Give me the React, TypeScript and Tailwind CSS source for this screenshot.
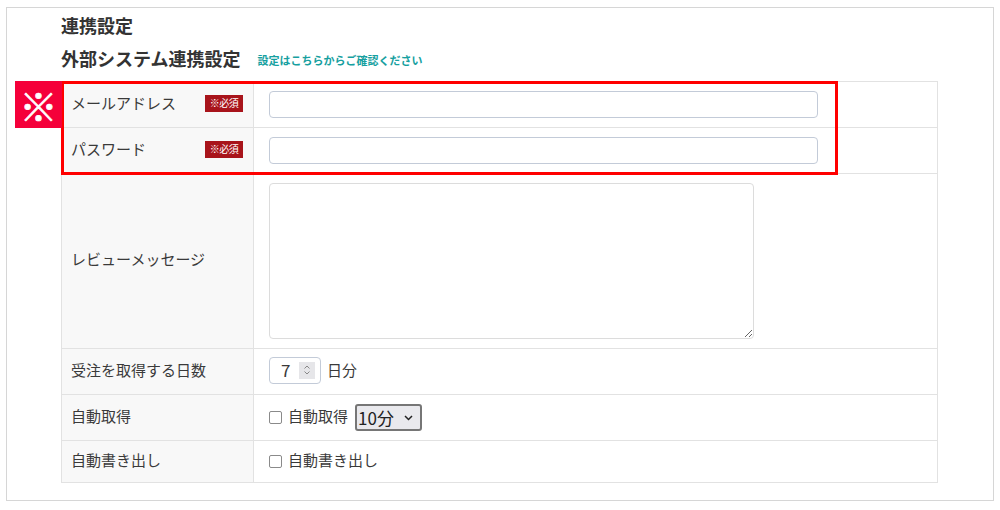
import React from 'react';

const font = { fontFamily: '"Noto Sans CJK JP", "Noto Sans", sans-serif' };

const Required: React.FC = () => (
  <span className="inline-flex items-center justify-center w-[38px] h-[17px] bg-[#a8141b] text-white text-[10px] leading-none tracking-tighter">
    ※必須
  </span>
);

export default function App() {
  return (
    <div className="w-[1000px] h-[510px] bg-white text-[#333]" style={font}>
      <div className="ml-[6px] mt-[7px] w-[988px] h-[494px] border border-[#d6d6d6] pl-[54px] relative">
        <h2 className="text-[18px] font-bold leading-none pt-[8px] text-[#333]">連携設定</h2>
        <div className="flex items-end mt-[15px]">
          <h3 className="text-[18px] font-bold leading-none text-[#333]">外部システム連携設定</h3>
          <a className="ml-[17px] text-[11px] font-bold text-[#16a0a0] leading-none mb-[1px]">
            設定はこちらからご確認ください
          </a>
        </div>

        <div className="relative mt-[14px] w-[877px]">
          <table className="w-full border-collapse text-[15px] text-[#3a3a3a] border border-[#e2e2e2]">
            <tbody>
              <tr className="h-[46px] border-b border-[#e2e2e2]">
                <th className="w-[192px] bg-[#f8f8f8] font-normal text-left pl-[9px] pr-[10px] pb-[3px] border-r border-[#e2e2e2]">
                  <div className="flex items-center justify-between">
                    <span>メールアドレス</span>
                    <Required />
                  </div>
                </th>
                <td className="pl-[15px]">
                  <input className="w-[549px] h-[27px] border border-[#c3cbd8] rounded-[4px] bg-white block" />
                </td>
              </tr>
              <tr className="h-[46px] border-b border-[#e2e2e2]">
                <th className="bg-[#f8f8f8] font-normal text-left pl-[9px] pr-[10px] pb-[3px] border-r border-[#e2e2e2]">
                  <div className="flex items-center justify-between">
                    <span>パスワード</span>
                    <Required />
                  </div>
                </th>
                <td className="pl-[15px]">
                  <input type="password" className="w-[549px] h-[27px] border border-[#c3cbd8] rounded-[4px] bg-white block" />
                </td>
              </tr>
              <tr className="h-[175px] border-b border-[#e2e2e2]">
                <th className="bg-[#f8f8f8] font-normal text-left pl-[9px] pb-[4px] border-r border-[#e2e2e2]">レビューメッセージ</th>
                <td className="pl-[15px] align-top pt-[9px]">
                  <textarea className="w-[485px] h-[156px] border border-[#dcdcdc] rounded-[4px] block resize" />
                </td>
              </tr>
              <tr className="h-[46px] border-b border-[#e2e2e2]">
                <th className="bg-[#f8f8f8] font-normal text-left pl-[9px] pb-[3px] border-r border-[#e2e2e2]">受注を取得する日数</th>
                <td className="pl-[15px]">
                  <div className="flex items-center pb-[3px]">
                    <div className="w-[52px] h-[27px] border border-[#c3cbd8] rounded-[4px] flex items-center justify-between pl-[11px] pr-[5px]">
                      <span className="text-[17px]">7</span>
                      <span className="w-[16px] h-[17px] bg-[#e6e6e9] flex flex-col items-center justify-center">
                        <svg width="8" height="12" viewBox="0 0 8 12" fill="none" stroke="#888" strokeWidth="1">
                          <path d="M1.5 4.5 L4 2 L6.5 4.5" />
                          <path d="M1.5 7.5 L4 10 L6.5 7.5" />
                        </svg>
                      </span>
                    </div>
                    <span className="ml-[6px]">日分</span>
                  </div>
                </td>
              </tr>
              <tr className="h-[46px] border-b border-[#e2e2e2]">
                <th className="bg-[#f8f8f8] font-normal text-left pl-[9px] pb-[3px] border-r border-[#e2e2e2]">自動取得</th>
                <td className="pl-[15px]">
                  <div className="flex items-center">
                    <span className="w-[13px] h-[13px] border border-[#8a8a8a] rounded-[2px] bg-white" />
                    <span className="ml-[6px] pb-[3px]">自動取得</span>
                    <div className="ml-[7px] w-[67px] h-[27px] border-2 border-[#767676] rounded-[3px] bg-[#e9e9ed] flex items-center justify-between pl-[1px] pr-[7px]">
                      <span className="text-[17px] text-[#222]">10分</span>
                      <svg width="9" height="6" viewBox="0 0 9 6" fill="none" stroke="#222" strokeWidth="1.5">
                        <path d="M1 1 L4.5 4.5 L8 1" />
                      </svg>
                    </div>
                  </div>
                </td>
              </tr>
              <tr className="h-[42px]">
                <th className="bg-[#f8f8f8] font-normal text-left pl-[9px] pb-[3px] border-r border-[#e2e2e2]">自動書き出し</th>
                <td className="pl-[15px]">
                  <div className="flex items-center">
                    <span className="w-[13px] h-[13px] border border-[#8a8a8a] rounded-[2px] bg-white" />
                    <span className="ml-[6px] pb-[3px]">自動書き出し</span>
                  </div>
                </td>
              </tr>
            </tbody>
          </table>

          <div className="absolute left-0 top-0 w-[777px] h-[94px] border-[3px] border-[#ff0000] pointer-events-none" />
          <div className="absolute left-[-46px] top-0 w-[47px] h-[47px] bg-[#f5003a] flex items-center justify-center text-white text-[38px] leading-none font-bold [-webkit-text-stroke:0.7px_white]">
            ※
          </div>
        </div>
      </div>
    </div>
  );
}
